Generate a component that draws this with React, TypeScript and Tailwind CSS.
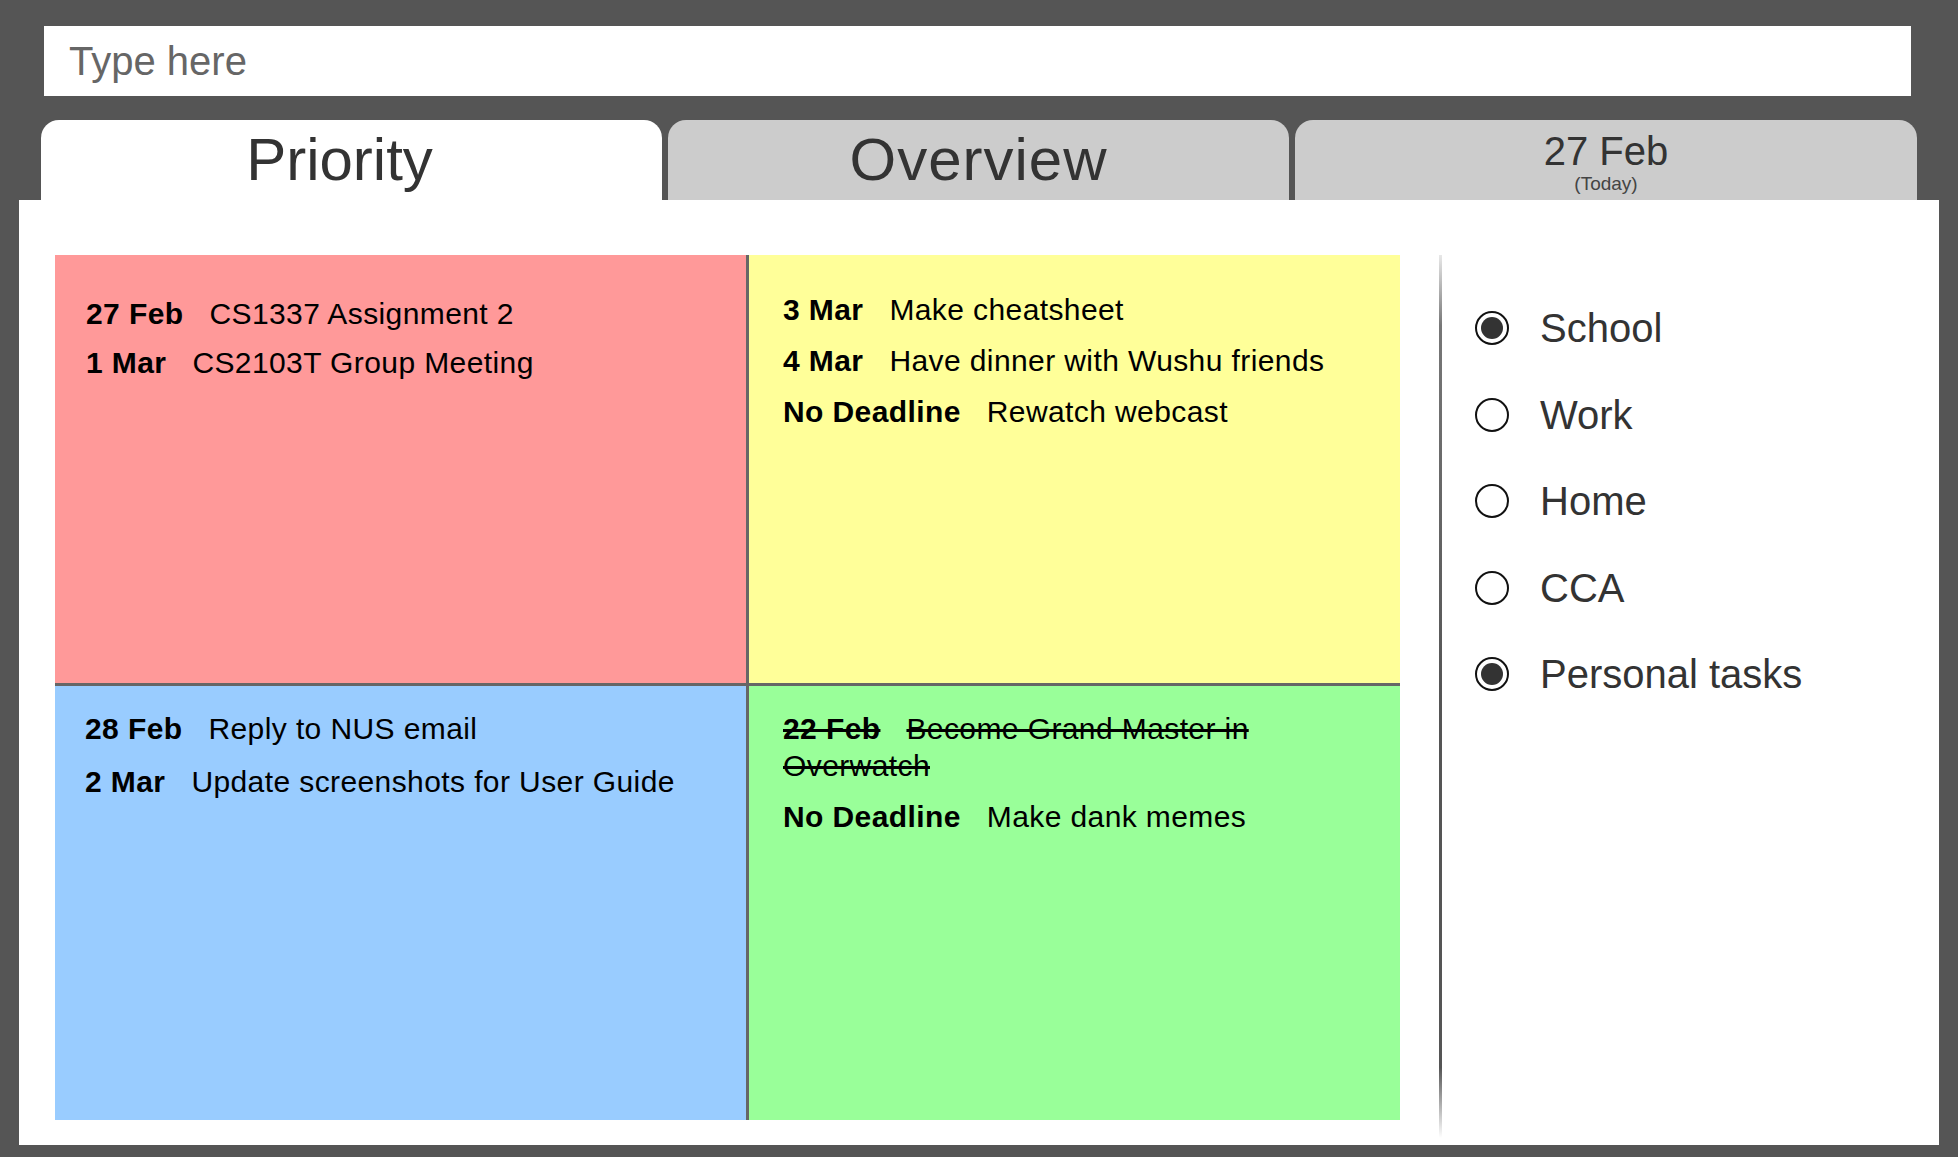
import { useState } from "react";

type Task = { date: string; text: string; done?: boolean };

type Quadrant = {
  key: string;
  bg: string;
  pad: string;
  gap: string;
  tasks: Task[];
};

const QUADRANTS: Quadrant[] = [
  {
    key: "urgent-important",
    bg: "bg-[#ff9999]",
    pad: "pt-[40px] pl-[31px]",
    gap: "space-y-[12px]",
    tasks: [
      { date: "27 Feb", text: "CS1337 Assignment 2" },
      { date: "1 Mar", text: "CS2103T Group Meeting" },
    ],
  },
  {
    key: "important",
    bg: "bg-[#ffff99]",
    pad: "pt-[36px] pl-[34px]",
    gap: "space-y-[14px]",
    tasks: [
      { date: "3 Mar", text: "Make cheatsheet" },
      { date: "4 Mar", text: "Have dinner with Wushu friends" },
      { date: "No Deadline", text: "Rewatch webcast" },
    ],
  },
  {
    key: "urgent",
    bg: "bg-[#99ccff]",
    pad: "pt-[24px] pl-[30px]",
    gap: "space-y-[16px]",
    tasks: [
      { date: "28 Feb", text: "Reply to NUS email" },
      { date: "2 Mar", text: "Update screenshots for User Guide" },
    ],
  },
  {
    key: "later",
    bg: "bg-[#99ff99]",
    pad: "pt-[24px] pl-[34px]",
    gap: "space-y-[14px]",
    tasks: [
      { date: "22 Feb", text: "Become Grand Master in Overwatch", done: true },
      { date: "No Deadline", text: "Make dank memes" },
    ],
  },
];

const CATEGORIES = [
  { name: "School", on: true },
  { name: "Work", on: false },
  { name: "Home", on: false },
  { name: "CCA", on: false },
  { name: "Personal tasks", on: true },
];

function Radio({ on }: { on: boolean }) {
  return (
    <span className="w-[34px] h-[34px] rounded-full border-[2px] border-[#111] bg-white grid place-items-center shrink-0">
      {on && <span className="w-[22px] h-[22px] rounded-full bg-[#333]" />}
    </span>
  );
}

export default function App() {
  const [tab, setTab] = useState(0);
  const [cats, setCats] = useState(CATEGORIES);

  const tabBase =
    "h-[80px] rounded-t-[18px] text-[#333] flex flex-col items-center justify-center leading-none";

  return (
    <div
      className="w-[1958px] h-[1157px] bg-[#555555] overflow-hidden pt-[26px]"
      style={{ fontFamily: '"Liberation Sans", Arial, sans-serif' }}
    >
      <input
        className="block ml-[44px] w-[1867px] h-[70px] bg-white pl-[25px] text-[40px] text-[#333] placeholder:text-[#666] outline-none"
        placeholder="Type here"
      />

      {/* tabs */}
      <div className="flex gap-[6px] ml-[41px] mt-[24px]">
        <button
          onClick={() => setTab(0)}
          className={`${tabBase} w-[621px] text-[60px] pr-[24px] ${tab === 0 ? "bg-white" : "bg-[#cccccc]"}`}
        >
          Priority
        </button>
        <button
          onClick={() => setTab(1)}
          className={`${tabBase} w-[621px] text-[60px] tracking-[1px] ${tab === 1 ? "bg-white" : "bg-[#cccccc]"}`}
        >
          Overview
        </button>
        <button
          onClick={() => setTab(2)}
          className={`${tabBase} w-[622px] ${tab === 2 ? "bg-white" : "bg-[#cccccc]"}`}
        >
          <span className="text-[40px] mt-[4px]">27 Feb</span>
          <span className="text-[19px] mt-[3px] text-[#444]">(Today)</span>
        </button>
      </div>

      {/* panel */}
      <div className="ml-[19px] w-[1920px] h-[945px] bg-white flex pt-[55px] pl-[36px]">
        <div className="grid grid-cols-[691px_651px] grid-rows-[428px_434px] gap-[3px] bg-[#666] w-[1345px] h-[865px] text-black text-[30px] tracking-[0.4px]">
          {QUADRANTS.map((q) => (
            <div key={q.key} className={`${q.bg} ${q.pad} pr-[20px]`}>
              <div className={q.gap}>
                {q.tasks.map((t) => (
                  <p
                    key={t.text}
                    className={`leading-[37px] ${t.done ? "line-through max-w-[500px]" : ""}`}
                  >
                    <span className="font-bold mr-[26px]">{t.date}</span>
                    {t.text}
                  </p>
                ))}
              </div>
            </div>
          ))}
        </div>

        <div className="w-[3px] h-[883px] ml-[39px] bg-[linear-gradient(to_bottom,#e8e8e8_0%,#777_8%,#555_50%,#555_92%,#ffffff_100%)]" />

        <div className="flex flex-col pl-[33px] pt-[30px]">
          {cats.map((c, i) => (
            <label
              key={c.name}
              className="h-[86.5px] flex items-center gap-[31px] text-[40px] text-[#333] cursor-pointer"
              onClick={() =>
                setCats((prev) => prev.map((p, j) => (j === i ? { ...p, on: !p.on } : p)))
              }
            >
              <Radio on={c.on} />
              {c.name}
            </label>
          ))}
        </div>
      </div>
    </div>
  );
}
